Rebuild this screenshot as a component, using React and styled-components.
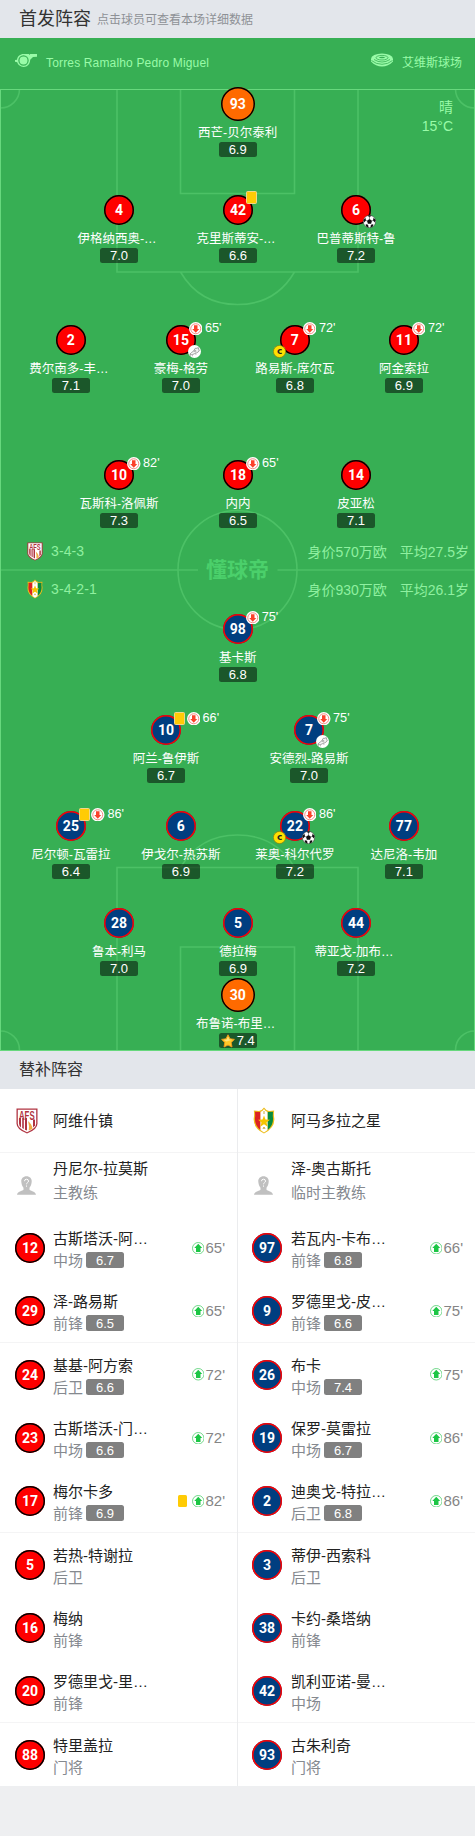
import React from 'react';
import styled, { createGlobalStyle } from 'styled-components';

const GlobalStyle = createGlobalStyle`
  * {
    box-sizing: border-box;
  }

  body {
    margin: 0;
    background-color: #eeeff1;
    font-family: 'Liberation Sans', 'Noto Sans CJK SC', sans-serif;
  }
`;

const Page = styled.main`
  width: 475px;
  min-height: 1836px;
  background-color: #eeeff1;
`;

const SectionHeading = styled.header`
  display: flex;
  align-items: center;
  height: 38px;
  padding: 0 19px;
  background-color: #e3e6eb;
`;

const Title = styled.h2`
  margin: 0;
  font-size: ${({ $small }) => ($small ? '16px' : '18px')};
  line-height: ${({ $small }) => ($small ? 40 : 38)}px;
  font-weight: 400;
  color: #333;
`;

const Hint = styled.span`
  margin-left: 6px;
  margin-top: -1px;
  font-size: 12px;
  color: #8e9196;
`;

const Pitch = styled.section`
  position: relative;
  height: 1013px;
  background-color: #37af54;
  color: #fff;
`;

const PitchLines = styled.svg`
  position: absolute;
  top: 0;
  left: 0;
`;

const Watermark = styled.span`
  position: absolute;
  top: 517px;
  left: 0;
  width: 475px;
  font-size: 21px;
  line-height: 30px;
  font-weight: 700;
  text-align: center;
  color: #4bd06b;
`;

const Content = styled.div`
  position: relative;
  display: flex;
  flex-direction: column;
`;

const MatchBar = styled.div`
  display: flex;
  justify-content: space-between;
  height: 49px;
  padding: 0 13px 0 15px;
  font-size: 12px;
  line-height: 50px;
  color: #99fba8;
`;

const MatchFact = styled.div`
  display: flex;
  align-items: flex-start;
  gap: 9px;

  svg {
    margin-top: 15px;
  }
`;

const Referee = styled.span`
  letter-spacing: 0.16px;
`;

const Weather = styled.div`
  position: absolute;
  top: 60px;
  right: 22px;
  font-size: 14px;
  line-height: 19px;
  text-align: right;
  color: #99fba8;
`;

const Row = styled.div`
  display: grid;
  grid-template-columns: ${({ $columns }) => $columns};
  justify-items: center;
  height: 70px;
  margin-top: ${({ $space }) => $space}px;
  padding-left: ${({ $inset }) => $inset}px;
`;

const PlayerWrapper = styled.div`
  display: flex;
  flex-direction: column;
  align-items: center;
  width: 100px;
`;

const ShirtSlot = styled.div`
  position: relative;
  display: flex;
  justify-content: center;
  align-items: center;
  width: 34px;
  height: 34px;
`;

const shirts = {
  home: { background: '#fe0000', border: '#000' },
  away: { background: '#003e80', border: '#fe0000' },
  keeper: { background: '#ff6a00', border: '#000' },
};

const Shirt = styled.div`
  flex: none;
  width: ${({ $kit }) => ($kit === 'keeper' ? 34 : 30)}px;
  height: ${({ $kit }) => ($kit === 'keeper' ? 34 : 30)}px;
  border-radius: 50%;
  background-color: ${({ $kit }) => shirts[$kit].background};
  box-shadow: inset 0 0 0 1.5px ${({ $kit }) => shirts[$kit].border};
  font-family: Roboto, sans-serif;
  font-size: 14px;
  font-weight: 700;
  line-height: ${({ $kit }) => ($kit === 'keeper' ? 34 : 30)}px;
  text-align: center;
  color: #fff;
`;

const PlayerName = styled.span`
  height: 21px;
  margin-right: ${({ $cut }) => ($cut ? 4 : 0)}px;
  font-size: 12.5px;
  line-height: 24px;
  white-space: nowrap;
`;

const Rating = styled.span`
  display: flex;
  justify-content: center;
  align-items: center;
  gap: 2px;
  width: 38px;
  height: ${({ $grey }) => ($grey ? 16 : 15)}px;
  border-radius: 2.5px;
  background-color: ${({ $grey }) => ($grey ? '#808080' : 'rgba(0, 0, 0, 0.5)')};
  font-size: 13px;
  line-height: 15px;
  color: #fff;
`;

const Events = styled.div`
  position: absolute;
  top: -2px;
  left: 25px;
  display: flex;
  align-items: center;
  gap: 1.5px;
`;

const Minute = styled.span`
  padding-left: 1px;
  font-size: 12.7px;
  line-height: 15px;
`;

const YellowCard = styled.span`
  width: ${({ $plain }) => ($plain ? 9 : 11)}px;
  height: ${({ $plain }) => ($plain ? 11.5 : 13)}px;
  border: ${({ $plain }) => ($plain ? 'none' : '1px solid #f3d68a')};
  border-radius: 1.5px;
  background-color: #ffcb05;
`;

const CornerMark = styled.div`
  position: absolute;
  top: 22px;
  left: ${({ $left }) => ($left ? -4.5 : 24)}px;
  width: 13px;
  height: 13px;

  svg {
    display: block;
  }
`;

const TeamBar = styled.div`
  display: flex;
  align-items: center;
  height: 38px;
  margin-top: ${({ $space }) => $space || 0}px;
  padding: 0 6px 0 27px;
  font-size: 14px;
  color: #8ff0a0;
`;

const Formation = styled.span`
  flex: 1;
  padding-left: 8px;
  letter-spacing: 0.1px;
`;

const Age = styled.span`
  margin-left: 13px;
`;

const Bench = styled.section`
  display: grid;
  grid-template-columns: 238px 237px;
  background-color: #fff;
`;

const BenchColumn = styled.div`
  border-right: ${({ $kit }) => ($kit === 'home' ? '1px solid #ebecee' : 'none')};

  & > div {
    padding-left: ${({ $kit }) => ($kit === 'home' ? 15 : 14)}px;
  }

  & > div > :first-child {
    margin-right: ${({ $kit }) => ($kit === 'home' ? 0 : 1)}px;
  }
`;

const BenchRow = styled.div`
  display: flex;
  align-items: ${({ $coach }) => ($coach ? 'flex-start' : 'center')};
  height: ${({ $head }) => ($head ? '64px' : '63.333px')};
  padding-right: 12px;
  border-bottom: ${({ $line }) => ($line ? '1px solid #f4f4f5' : 'none')};
`;

const Emblem = styled.div`
  flex: none;
  width: 38px;
  padding-left: 1px;

  svg {
    display: block;
  }
`;

const Avatar = styled(Emblem)`
  padding: 23px 0 0 2px;
`;

const BenchText = styled.div`
  flex: 1;
  display: flex;
  flex-direction: column;
  padding-left: ${({ $player }) => ($player ? 8 : 0)}px;
  padding-top: ${({ $coach }) => ($coach ? 4 : 0)}px;
`;

const BenchName = styled.span`
  font-size: 15px;
  line-height: 24px;
  white-space: nowrap;
  color: #222;
`;

const BenchRole = styled.div`
  display: flex;
  align-items: center;
  gap: 3px;
  margin-bottom: -1px;
  font-size: 15px;
  line-height: ${({ $coach }) => ($coach ? 23 : 19)}px;
  color: #85898f;
`;

const BenchEvents = styled.div`
  display: flex;
  align-items: center;
  gap: 1px;
  font-size: 15px;
  color: #858585;

  ${YellowCard} {
    margin-right: 4px;
  }
`;

const SubOffIcon = () => (
  <svg width="13.5" height="13.5" viewBox="0 0 27 27">
    <circle cx="13.5" cy="13.5" r="13.5" fill="#fff" />
    <circle cx="13.5" cy="13.5" r="10" fill="none" stroke="#f2837b" strokeWidth="1.8" />
    <path d="M13.5 21.500 20.500 14H17V6.500h-7V14H6.500z" fill="#fb412a" />
  </svg>
);

const SubOnIcon = () => (
  <svg width="12.5" height="12.5" viewBox="0 0 25 25">
    <circle cx="12.5" cy="12.5" r="11.5" fill="#fff" stroke="#4fce6d" strokeWidth="1.6" />
    <path d="M12.500 3.500 20.500 12H17v8H8v-8H4.500z" fill="#1cc645" />
  </svg>
);

const BallIcon = () => (
  <svg width="13" height="13" viewBox="0 0 26 26">
    <circle cx="13" cy="13" r="12.4" fill="#fff" stroke="#222" strokeWidth="1" />
    <path d="m13 8 5 3.6-1.9 5.9H9.9L8 11.6z" fill="#111" />
    <path
      d="M8.5 1.7 13 4l4.5-2.3Q13-.3 8.5 1.7zM1 10l1 5 4-4-.8-5Q1.800 7.500 1 10zM25 10l-1 5-4-4 .8-5Q24.200 7.500 25 10zM6 22.600 5.500 18l5 2.500.5 4.500Q8 24.500 6 22.600zM20 22.600l.5-4.600-5 2.500-.5 4.500Q18 24.500 20 22.600z"
      fill="#111"
    />
    <path d="M13 4v4M6 11l2 .6M20 11l-2 .6M9.9 17.500l-1.500 2M16.100 17.500l1.500 2" stroke="#222" />
  </svg>
);

const BootIcon = () => (
  <svg width="13" height="13" viewBox="0 0 26 26">
    <circle cx="13" cy="13" r="13" fill="#fff" />
    <path
      d="M3.500 18.500q4-4.500 8-6.500l3-5.500q4 1 6-1.500l2 7-4.500 3.500q-5 1.500-8.500 3.500-3 1-6-.5z"
      fill="#f4f4f4"
      stroke="#777"
      strokeWidth="1.3"
    />
    <path d="m11.500 12 4.500 2M12.700 10l4 2M5 20.500v2M9 20.500v2M15 17.500l1 2" stroke="#888" strokeWidth="1.3" />
  </svg>
);

const CaptainIcon = () => (
  <svg width="13" height="13" viewBox="0 0 13 13">
    <circle cx="6.5" cy="6.5" r="6.1" fill="#ffe100" stroke="#8b8512" strokeWidth=".8" />
    <text x="6.6" y="9.2" textAnchor="middle" fontFamily="DejaVu Sans" fontWeight="700" fontSize="9" fill="#222">
      c
    </text>
  </svg>
);

const StarIcon = () => (
  <svg width="14" height="14" viewBox="0 0 14 14">
    <path
      d="m7 .8 2 4 4.400.6-3.200 3.100.8 4.500L7 11l-4 2 .8-4.500L.6 5.400 5 4.800z"
      fill="#ffc928"
      stroke="#f59a1b"
      strokeWidth=".9"
      strokeLinejoin="round"
    />
    <path d="m7 2.500 1.300 2.900 3 .4-5.800 1.700-3-1.700 3.200-.4z" fill="#ffe27a" />
  </svg>
);

const WhistleIcon = () => (
  <svg width="22" height="15" viewBox="0 0 22 15">
    <path
      d="M8.500 1H14v1l1.300-1H22v2.800l-4 .3-2.800 2.700C15 11.200 12.400 14 8.600 14 5.400 14 3 12 2.200 9.300L0 8.800V7l2-.3C2.500 3.200 5.200 1 8.500 1z"
      fill="#99fba8"
    />
    <circle cx="8.5" cy="7.5" r="4.600" fill="#99fba8" stroke="#37af54" strokeWidth="1.200" />
  </svg>
);

const StadiumIcon = () => (
  <svg width="22" height="14" viewBox="0 0 22 14">
    <path d="M0 6v2.500C3 12 7 13.500 11 13.500S19 12 22 8.500V6z" fill="#99fba8" />
    <ellipse cx="11" cy="6" rx="11" ry="5.500" fill="#99fba8" />
    <path
      d="M.5 7.500Q5 11.300 11 11.300T21.500 7.500M3 6.500Q7 9 11 9t8-2.500"
      fill="none"
      stroke="#37af54"
      strokeWidth=".8"
    />
    <ellipse cx="11" cy="4.700" rx="6" ry="2.300" fill="none" stroke="#37af54" strokeWidth=".8" />
    <ellipse cx="11" cy="4.500" rx="3" ry=".7" fill="#37af54" />
  </svg>
);

const HomeCrest = ({ width = 22, height = 26 }) => (
  <svg width={width} height={height} viewBox="0 0 22 26">
    <path d="M.5.5h21v15q0 6-10.500 10Q.5 21.500.5 15.500z" fill="#b03340" />
    <path d="M1.800 1.800h18.400v13.700q0 4.900-9.200 8.700-9.200-3.800-9.200-8.700z" fill="#fff" />
    <path d="M3 10v5.500q0 2.300 2 4V10zM6.200 10h1.600v11L6.200 20zM9 10h2v12.500L9 21.700z" fill="#b03340" />
    <text transform="scale(1 1.6)" x="3" y="7.200" fontSize="7.800" fontWeight="700" fill="#b03340">
      AFS
    </text>
    <path d="M12 13q4 3 4.500 8l-3.700 1.500q.7-5-.8-9.500z" fill="#f0ad45" />
    <path d="M17 11.500h2v6l-2 2z" fill="#b03340" />
  </svg>
);

const AwayCrest = ({ width = 22, height = 27 }) => (
  <svg width={width} height={height} viewBox="0 0 22 27">
    <path
      d="M11 .5q2 3 5 3.500l5.200-.5q-.7 4 .1 8Q22 21 11 26.500 0 21 .7 11.500q.8-4 .1-8L6 4q3-.5 5-3.500z"
      fill="#edbd1b"
    />
    <path d="M7.500 5 2 4.800q.4 4-.1 7Q2 19 7.500 23z" fill="#dc2222" />
    <path d="m14.500 5 5.500-.2q-.4 4 .1 7Q20 19 14.500 23z" fill="#078b3e" />
    <path d="M7.500 5Q10 4 11 2q1 2 3.500 3v18L11 25.500 7.500 23z" fill="#fff" />
    <path d="m11 8.500 1.500 4 4.500.2-3.500 2.800 1.200 4.300-3.700-2.500-3.700 2.500 1.200-4.300L5 12.700l4.500-.2z" fill="#f5c500" />
    <path d="M11 4v3M10 22l1-2 1 2" fill="none" stroke="#c9ab38" strokeWidth="1" />
  </svg>
);

const PersonIcon = () => (
  <svg width="19" height="19" viewBox="0 0 19 19">
    <path
      d="M9.500.3c3.300 0 5.500 2.400 5.200 5.500-.2 2.700-1 4.500-2.200 6v2c1 1.200 6.200 1.800 6.500 5H0c.3-3.200 5.500-3.800 6.500-5v-2C5.300 10.300 4.500 8.500 4.300 5.800 4 2.700 6.200.3 9.500.3z"
      fill="#c0c0c0"
    />
    <path
      d="M7.500 5.200q0-2 2-2t2 1.900q0 1-1 1.600T9.500 8.300M9.500 9.500v1.200"
      fill="none"
      stroke="#fff"
      strokeWidth="1"
    />
  </svg>
);

const corners = { goal: BallIcon, assist: BootIcon };

const Player = ({ number, name, rating, kit, card, off, mark, captain, best }) => {
  const Mark = corners[mark];
  return (
    <PlayerWrapper>
      <ShirtSlot>
        <Shirt $kit={kit}>{number}</Shirt>
        {(card || off) && (
          <Events>
            {card && <YellowCard />}
            {off && <SubOffIcon />}
            {off && <Minute>{off}&#39;</Minute>}
          </Events>
        )}
        {captain && (
          <CornerMark $left>
            <CaptainIcon />
          </CornerMark>
        )}
        {Mark && (
          <CornerMark>
            <Mark />
          </CornerMark>
        )}
      </ShirtSlot>
      <PlayerName $cut={name.endsWith('…')}>{name}</PlayerName>
      <Rating>
        {best && <StarIcon />}
        {rating}
      </Rating>
    </PlayerWrapper>
  );
};

const one = { $columns: '100px', $inset: 187.7 };
const two = { $columns: '143px 143px', $inset: 94.5 };
const three = { $columns: '119px 119px 117px', $inset: 59.5 };
const four = { $columns: '110px 110px 118px 100px', $inset: 15.9 };

const homeRows = [
  { layout: one, space: 0, players: [{ number: 93, name: '西芒-贝尔泰利', rating: '6.9', kit: 'keeper' }] },
  {
    layout: three,
    space: 36,
    players: [
      { number: 4, name: '伊格纳西奥-…', rating: '7.0' },
      { number: 42, name: '克里斯蒂安-…', rating: '6.6', card: true },
      { number: 6, name: '巴普蒂斯特-鲁', rating: '7.2', mark: 'goal' },
    ],
  },
  {
    layout: four,
    space: 60,
    players: [
      { number: 2, name: '费尔南多-丰…', rating: '7.1' },
      { number: 15, name: '豪梅-格劳', rating: '7.0', off: 65, mark: 'assist' },
      { number: 7, name: '路易斯-席尔瓦', rating: '6.8', off: 72, captain: true },
      { number: 11, name: '阿金索拉', rating: '6.9', off: 72 },
    ],
  },
  {
    layout: three,
    space: 65,
    players: [
      { number: 10, name: '瓦斯科-洛佩斯', rating: '7.3', off: 82 },
      { number: 18, name: '内内', rating: '6.5', off: 65 },
      { number: 14, name: '皮亚松', rating: '7.1' },
    ],
  },
];

const awayRows = [
  { layout: one, space: 4, players: [{ number: 98, name: '基卡斯', rating: '6.8', off: 75 }] },
  {
    layout: two,
    space: 31,
    players: [
      { number: 10, name: '阿兰-鲁伊斯', rating: '6.7', card: true, off: 66 },
      { number: 7, name: '安德烈-路易斯', rating: '7.0', off: 75, mark: 'assist' },
    ],
  },
  {
    layout: four,
    space: 26,
    players: [
      { number: 25, name: '尼尔顿-瓦雷拉', rating: '6.4', card: true, off: 86 },
      { number: 6, name: '伊戈尔-热苏斯', rating: '6.9' },
      { number: 22, name: '莱奥-科尔代罗', rating: '7.2', off: 86, captain: true, mark: 'goal' },
      { number: 77, name: '达尼洛-韦加', rating: '7.1' },
    ],
  },
  {
    layout: three,
    space: 27,
    players: [
      { number: 28, name: '鲁本-利马', rating: '7.0' },
      { number: 5, name: '德拉梅', rating: '6.9' },
      { number: 44, name: '蒂亚戈-加布…', rating: '7.2' },
    ],
  },
  { layout: one, space: 2, players: [{ number: 30, name: '布鲁诺-布里…', rating: '7.4', kit: 'keeper', best: true }] },
];

const benches = [
  {
    kit: 'home',
    team: '阿维什镇',
    Crest: HomeCrest,
    coach: '丹尼尔-拉莫斯',
    coachRole: '主教练',
    players: [
      { number: 12, name: '古斯塔沃-阿…', role: '中场', rating: '6.7', on: 65 },
      { number: 29, name: '泽-路易斯', role: '前锋', rating: '6.5', on: 65 },
      { number: 24, name: '基基-阿方索', role: '后卫', rating: '6.6', on: 72 },
      { number: 23, name: '古斯塔沃-门…', role: '中场', rating: '6.6', on: 72 },
      { number: 17, name: '梅尔卡多', role: '前锋', rating: '6.9', on: 82, card: true },
      { number: 5, name: '若热-特谢拉', role: '后卫' },
      { number: 16, name: '梅纳', role: '前锋' },
      { number: 20, name: '罗德里戈-里…', role: '前锋' },
      { number: 88, name: '特里盖拉', role: '门将' },
    ],
  },
  {
    kit: 'away',
    team: '阿马多拉之星',
    Crest: AwayCrest,
    coach: '泽-奥古斯托',
    coachRole: '临时主教练',
    players: [
      { number: 97, name: '若瓦内-卡布…', role: '前锋', rating: '6.8', on: 66 },
      { number: 9, name: '罗德里戈-皮…', role: '前锋', rating: '6.6', on: 75 },
      { number: 26, name: '布卡', role: '中场', rating: '7.4', on: 75 },
      { number: 19, name: '保罗-莫雷拉', role: '中场', rating: '6.7', on: 86 },
      { number: 2, name: '迪奥戈-特拉…', role: '后卫', rating: '6.8', on: 86 },
      { number: 3, name: '蒂伊-西索科', role: '后卫' },
      { number: 38, name: '卡约-桑塔纳', role: '前锋' },
      { number: 42, name: '凯利亚诺-曼…', role: '中场' },
      { number: 93, name: '古朱利奇', role: '门将' },
    ],
  },
];

const Lineup = ({ rows, kit }) =>
  rows.map(({ layout, space, players }) => (
    <Row key={players[0].name} {...layout} $space={space}>
      {players.map(player => (
        <Player key={player.name} kit={kit} {...player} />
      ))}
    </Row>
  ));

const Field = () => (
  <PitchLines width="475" height="1013" viewBox="0 0 475 1013" fill="none" stroke="#4cc166" strokeWidth="1.600">
    <path d="M117 51v183h241V51M180.500 51v104.500h114V51M180.500 234q19 32.500 57 32.500t57-32.500" />
    <path d="M117 1012V829.500h241V1012M180.500 1012V909h114v103M180.500 829.500q19-32.500 57-32.500t57 32.500" />
    <path d="M19.500 51A19 19 0 0 1 0 70M455.500 51A19 19 0 0 0 475 70M19.500 1012A19 19 0 0 0 0 993M455.500 1012A19 19 0 0 1 475 993" />
    <circle cx="237.5" cy="532" r="59.5" />
    <path d="M0 532h198M277.500 532H475" />
    <rect x=".5" y="51.500" width="474" height="961" stroke="#67d87d" strokeWidth="1" />
  </PitchLines>
);

const App = () => (
  <Page>
    <GlobalStyle />
    <SectionHeading>
      <Title>首发阵容</Title>
      <Hint>点击球员可查看本场详细数据</Hint>
    </SectionHeading>
    <Pitch>
      <Field />
      <Watermark>懂球帝</Watermark>
      <Content>
        <MatchBar>
          <MatchFact>
            <WhistleIcon />
            <Referee>Torres Ramalho Pedro Miguel</Referee>
          </MatchFact>
          <MatchFact>
            <StadiumIcon />
            <span>艾维斯球场</span>
          </MatchFact>
        </MatchBar>
        <Lineup rows={homeRows} kit="home" />
        <TeamBar $space={4}>
          <HomeCrest width={16} height={19} />
          <Formation>3-4-3</Formation>
          <span>身价570万欧</span>
          <Age>平均27.5岁</Age>
        </TeamBar>
        <TeamBar>
          <AwayCrest width={16} height={20} />
          <Formation>3-4-2-1</Formation>
          <span>身价930万欧</span>
          <Age>平均26.1岁</Age>
        </TeamBar>
        <Lineup rows={awayRows} kit="away" />
      </Content>
      <Weather>
        <div>晴</div>
        <div>15°C</div>
      </Weather>
    </Pitch>
    <SectionHeading>
      <Title $small>替补阵容</Title>
    </SectionHeading>
    <Bench>
      {benches.map(({ kit, team, Crest, coach, coachRole, players }) => (
        <BenchColumn key={kit} $kit={kit}>
          <BenchRow $head $line>
            <Emblem>
              <Crest />
            </Emblem>
            <BenchName>{team}</BenchName>
          </BenchRow>
          <BenchRow $coach>
            <Avatar>
              <PersonIcon />
            </Avatar>
            <BenchText $coach>
              <BenchName>{coach}</BenchName>
              <BenchRole $coach>{coachRole}</BenchRole>
            </BenchText>
          </BenchRow>
          {players.map(({ number, name, role, rating, on, card }, index) => (
            <BenchRow key={name} $line={index % 3 === 1}>
              <Shirt $kit={kit}>{number}</Shirt>
              <BenchText $player>
                <BenchName>{name}</BenchName>
                <BenchRole>
                  {role}
                  {rating && <Rating $grey>{rating}</Rating>}
                </BenchRole>
              </BenchText>
              {on && (
                <BenchEvents>
                  {card && <YellowCard $plain />}
                  <SubOnIcon />
                  {on}&#39;
                </BenchEvents>
              )}
            </BenchRow>
          ))}
        </BenchColumn>
      ))}
    </Bench>
  </Page>
);

export default App;
